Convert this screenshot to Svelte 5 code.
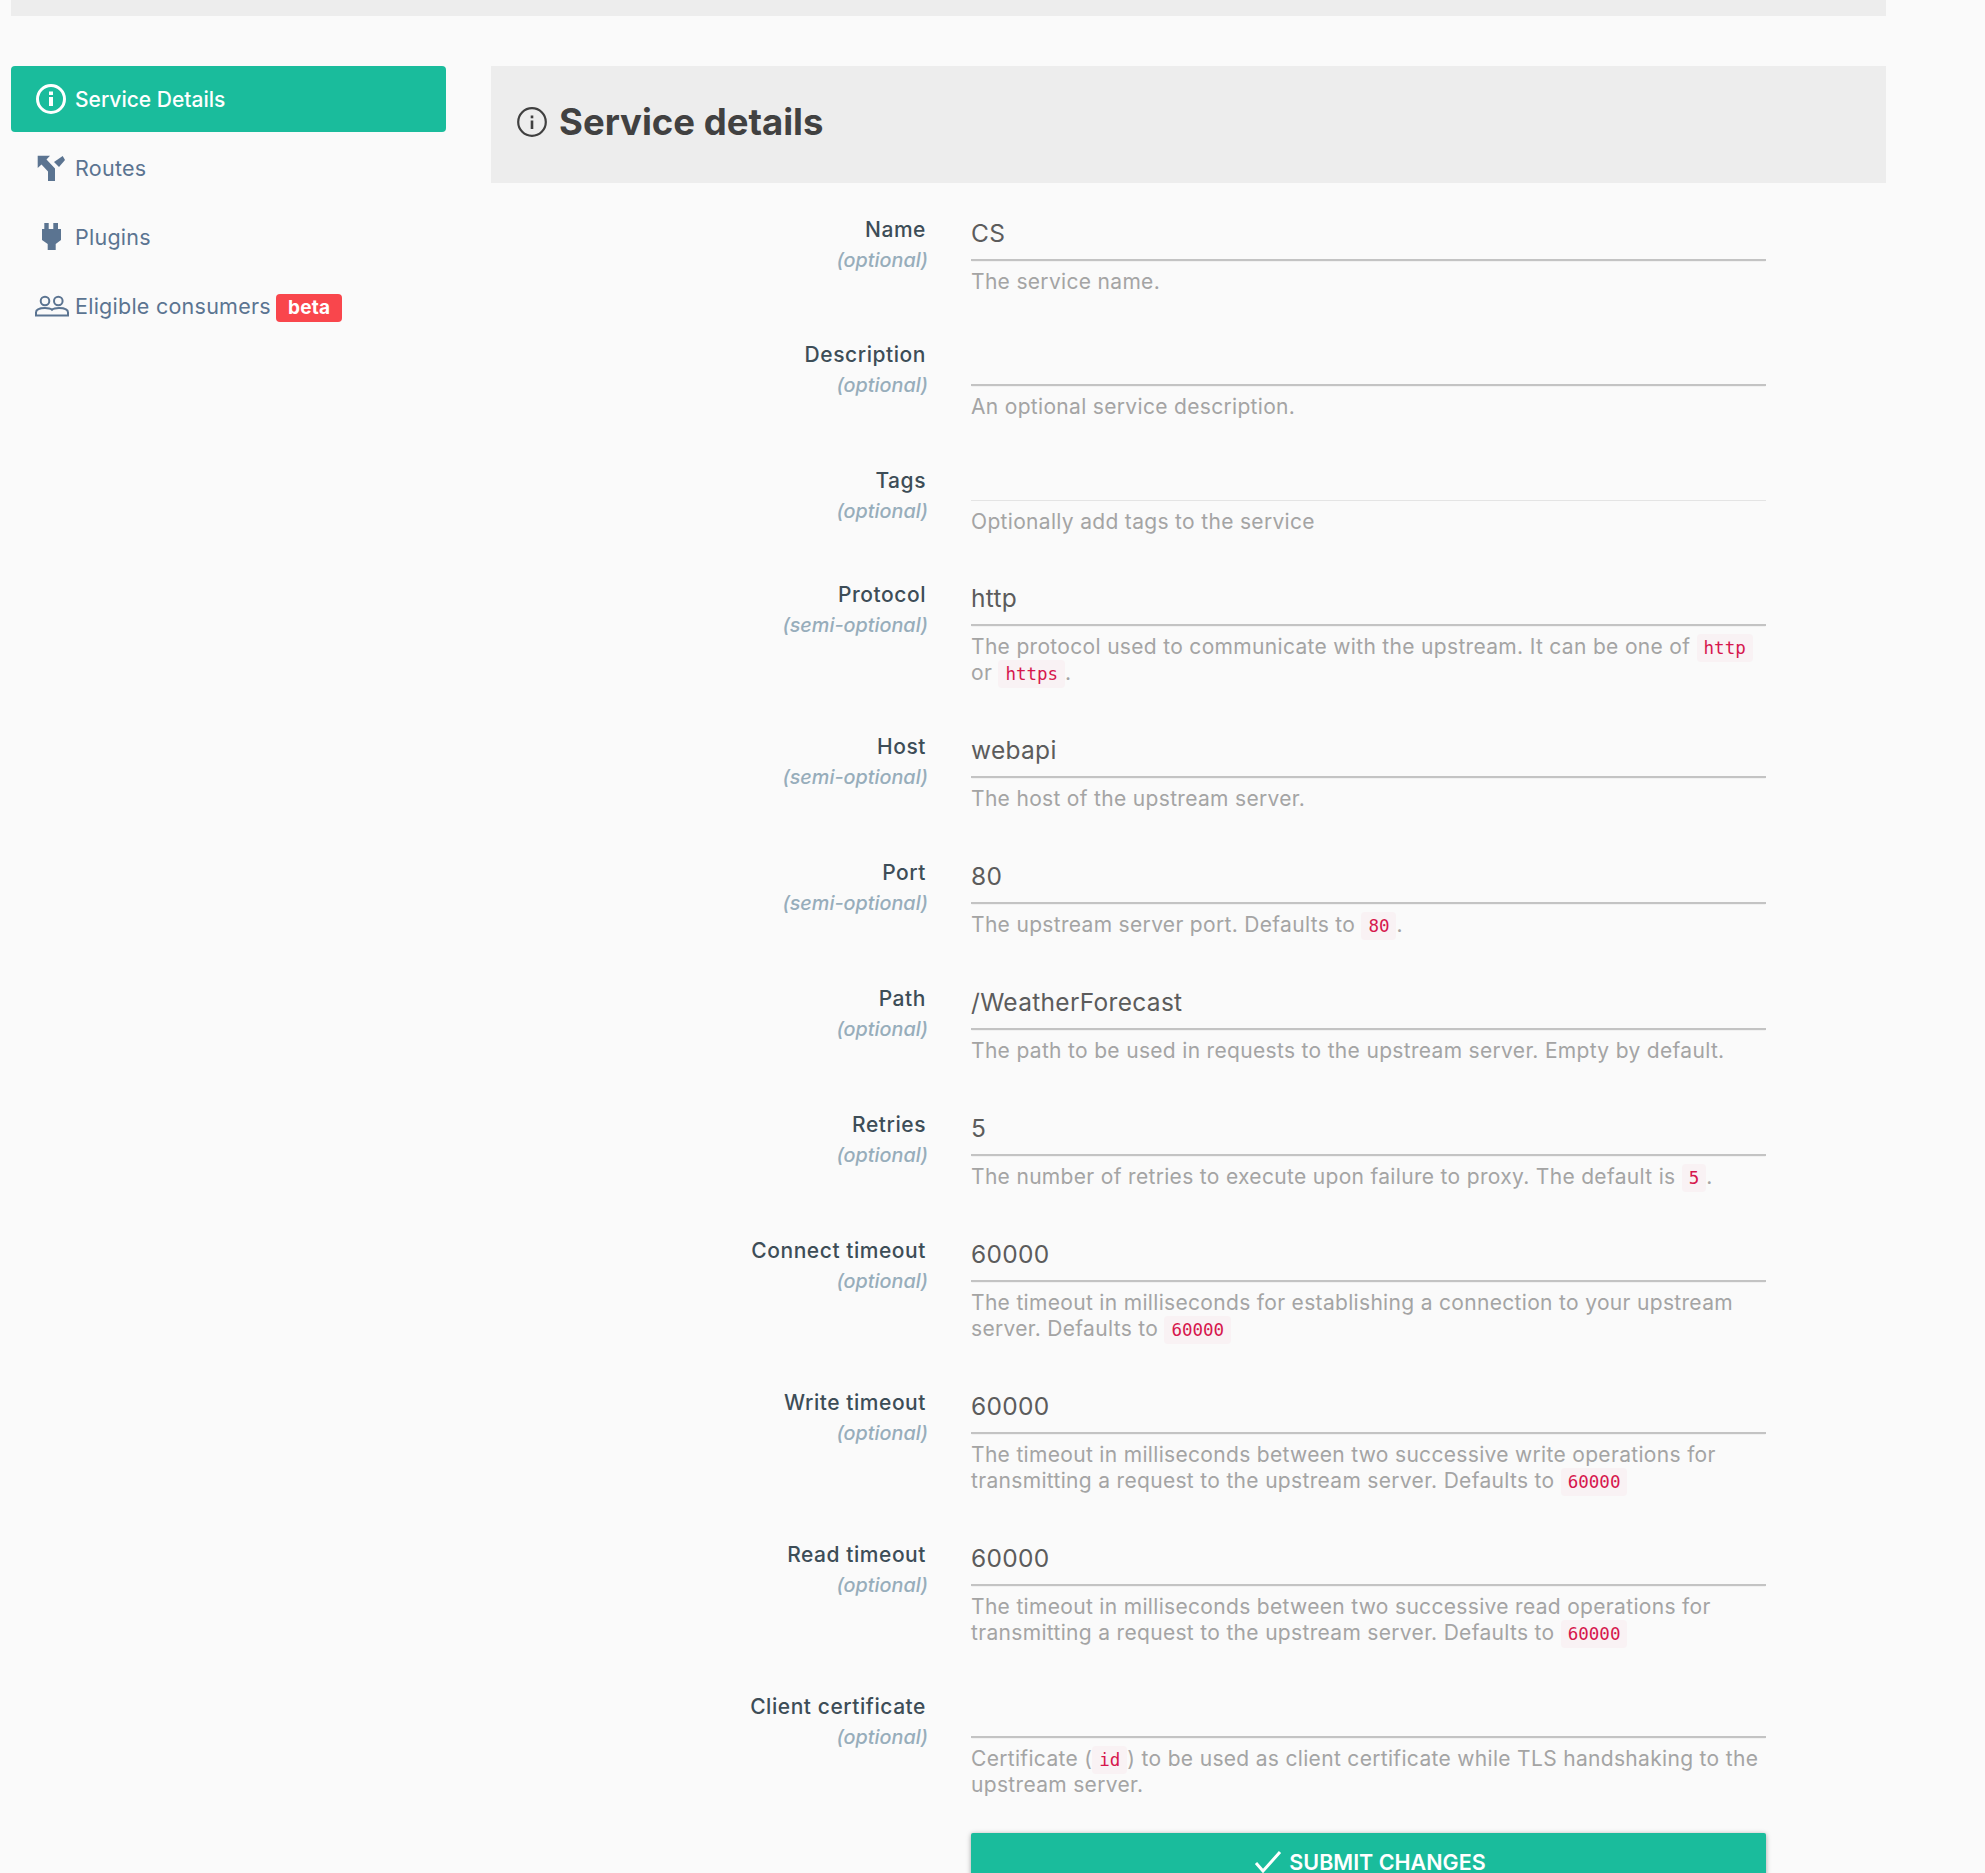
<script lang="ts">
  type Part = string | { code: string };
  interface Field {
    label: string;
    hint: string;
    value: string;
    help: Part[];
    tags?: boolean;
  }

  const nav = [
    { label: 'Service Details', icon: 'info', active: true },
    { label: 'Routes', icon: 'routes' },
    { label: 'Plugins', icon: 'plug' },
    { label: 'Eligible consumers', icon: 'users', badge: 'beta' },
  ];

  const fields: Field[] = [
    { label: 'Name', hint: '(optional)', value: 'CS', help: ['The service name.'] },
    { label: 'Description', hint: '(optional)', value: '', help: ['An optional service description.'] },
    { label: 'Tags', hint: '(optional)', value: '', help: ['Optionally add tags to the service'], tags: true },
    {
      label: 'Protocol',
      hint: '(semi-optional)',
      value: 'http',
      help: ['The protocol used to communicate with the upstream. It can be one of ', { code: 'http' }, ' or ', { code: 'https' }, '.'],
    },
    { label: 'Host', hint: '(semi-optional)', value: 'webapi', help: ['The host of the upstream server.'] },
    { label: 'Port', hint: '(semi-optional)', value: '80', help: ['The upstream server port. Defaults to ', { code: '80' }, '.'] },
    { label: 'Path', hint: '(optional)', value: '/WeatherForecast', help: ['The path to be used in requests to the upstream server. Empty by default.'] },
    { label: 'Retries', hint: '(optional)', value: '5', help: ['The number of retries to execute upon failure to proxy. The default is ', { code: '5' }, '.'] },
    {
      label: 'Connect timeout',
      hint: '(optional)',
      value: '60000',
      help: ['The timeout in milliseconds for establishing a connection to your upstream server. Defaults to ', { code: '60000' }],
    },
    {
      label: 'Write timeout',
      hint: '(optional)',
      value: '60000',
      help: ['The timeout in milliseconds between two successive write operations for transmitting a request to the upstream server. Defaults to ', { code: '60000' }],
    },
    {
      label: 'Read timeout',
      hint: '(optional)',
      value: '60000',
      help: ['The timeout in milliseconds between two successive read operations for transmitting a request to the upstream server. Defaults to ', { code: '60000' }],
    },
    {
      label: 'Client certificate',
      hint: '(optional)',
      value: '',
      help: ['Certificate (', { code: 'id' }, ') to be used as client certificate while TLS handshaking to the upstream server.'],
    },
  ];
</script>

{#snippet icon(name: string)}
  {#if name === 'info'}
    <svg class="ico" viewBox="0 0 30 30" width="30" height="30">
      <circle cx="15" cy="15" r="13.500" fill="none" stroke="currentColor" stroke-width="3" />
      <rect x="13" y="13" width="4" height="9" fill="currentColor" />
      <rect x="13" y="7.500" width="4" height="3.500" fill="currentColor" />
    </svg>
  {:else if name === 'routes'}
    <svg class="ico" viewBox="0 0 30 30" width="30" height="30">
      <path fill="currentColor" d="M1.700 2.700H14L10.500 6.500 19 15.500V28H12V18.500L5.500 11.500 1.700 15z" />
      <path fill="currentColor" d="M26.700 3L29 7 23 14 18 9z" />
    </svg>
  {:else if name === 'plug'}
    <svg class="ico" viewBox="0 0 30 30" width="30" height="30">
      <path fill="currentColor" d="M8.300 1h4.400v6h4.600V1H22v6h3v11l-5.300 4v6h-8v-6L6 18V7h2.300z" />
    </svg>
  {:else}
    <svg class="ico users" viewBox="0 0 34 30" width="34" height="30">
      <g fill="none" stroke="currentColor" stroke-width="2">
        <circle cx="10" cy="10" r="4.300" />
        <circle cx="23.300" cy="10" r="4.300" />
        <path d="M1 24.500v-3c0-2.800 3-4.500 9-4.500 3 0 5.700.6 7 1.800 1.300-1.200 4-1.800 7-1.800 6 0 9 1.700 9 4.500v3z" />
      </g>
    </svg>
  {/if}
{/snippet}

<div class="page">
  <div class="topbar"></div>
  <div class="layout">
    <nav class="side">
      {#each nav as item}
        <a class="nav-item" class:active={item.active} href="#top">
          <span class="nav-icon">{@render icon(item.icon)}</span>
          <span>{item.label}</span>
          {#if item.badge}<span class="badge">{item.badge}</span>{/if}
        </a>
      {/each}
    </nav>

    <main class="content">
      <header class="head">
        <svg viewBox="0 0 30 30" width="30" height="30">
          <circle cx="15" cy="15" r="13.800" fill="none" stroke="#404040" stroke-width="2.200" />
          <rect x="13.700" y="13.500" width="2.600" height="8.500" fill="#404040" />
          <rect x="13.700" y="8.500" width="2.600" height="2.800" fill="#404040" />
        </svg>
        <h1>Service details</h1>
      </header>

      <form class="form">
        {#each fields as f}
          <div class="row" class:tags={f.tags}>
            <div class="labels">
              <div class="label">{f.label}</div>
              <div class="hint">{f.hint}</div>
            </div>
            <div class="control">
              <div class="input">{f.value}</div>
              <p class="help">{#each f.help as part}{#if typeof part === 'string'}{part}{:else}<code>{part.code}</code>{/if}{/each}</p>
            </div>
          </div>
        {/each}
        <div class="actions">
          <button type="button" class="submit">
            <svg viewBox="0 0 28 24" width="28" height="24">
              <path d="M2 13l7 8L26 2" fill="none" stroke="#fff" stroke-width="3" />
            </svg>
            SUBMIT CHANGES
          </button>
        </div>
      </form>
    </main>
  </div>
</div>

<style>
  :global(body) {
    margin: 0;
    background: #fafafa;
  }

  .page {
    width: 1985px;
    height: 1873px;
    overflow: hidden;
    padding-left: 11px;
    box-sizing: border-box;
    font-family: Inter, 'DejaVu Sans', sans-serif;
    font-size: 20px;
  }

  .topbar {
    width: 1875px;
    height: 16px;
    background: #ededed;
  }

  .layout {
    display: flex;
    gap: 45px;
    width: 1875px;
    margin-top: 50px;
  }

  .side {
    width: 435px;
    flex: none;
    display: flex;
    flex-direction: column;
    gap: 3px;
  }

  .nav-item {
    display: flex;
    align-items: center;
    height: 66px;
    padding-left: 25px;
    color: #5b7491;
    text-decoration: none;
    border-radius: 4px;
    font-size: 21.500px;
    letter-spacing: 0.25px;
  }

  .nav-item.active {
    background: #1abc9c;
    color: #fff;
    font-weight: 500;
    font-size: 21px;
    letter-spacing: 0;
  }

  .nav-icon {
    width: 39px;
    flex: none;
    display: flex;
  }

  .users {
    margin-left: -1px;
    flex: none;
  }

  .badge {
    margin: 4px 0 0 5px;
    padding: 0 12px;
    height: 28px;
    line-height: 27px;
    background: #f9464c;
    color: #fff;
    border-radius: 4px;
    font-weight: 700;
    font-size: 19px;
  }

  .content {
    flex: 1;
    min-width: 0;
  }

  .head {
    display: flex;
    align-items: center;
    gap: 12px;
    height: 117px;
    padding-left: 26px;
    background: #ededed;
  }

  .head svg {
    margin-bottom: 6px;
  }

  .head h1 {
    margin: 0 0 5px;
    font-size: 36.500px;
    font-weight: 700;
    color: #414141;
  }

  .form {
    padding-top: 29px;
  }

  .row {
    display: grid;
    grid-template-columns: 435px 795px;
    column-gap: 45px;
    margin-bottom: 43px;
  }

  .row:first-child,
  .row.tags {
    margin-bottom: 42px;
  }

  .row:nth-last-child(2) {
    margin-bottom: 35px;
  }

  .labels {
    text-align: right;
    padding-top: 4px;
  }

  .label {
    color: #3d4d57;
    font-size: 21px;
    font-weight: 500;
    letter-spacing: 0.55px;
    line-height: 28px;
  }

  .hint {
    margin: 3px -2px 0 0;
    color: #97adbb;
    font-size: 19.800px;
    font-style: italic;
    font-weight: 500;
    line-height: 26px;
  }

  .input {
    height: 46px;
    box-sizing: content-box;
    padding-top: 1px;
    border-bottom: 2px solid #c3c3c3;
    box-shadow: 0 1px 0 -0.5px #e8e8e8;
    color: #5c5c5c;
    font-size: 24.500px;
    letter-spacing: 0.3px;
    line-height: 40px;
  }

  .tags .input {
    height: 36px;
    border-bottom: 1px solid #e4e4e4;
    box-shadow: none;
  }

  .help {
    margin: 8px 0 0;
    color: #a4a4a4;
    font-size: 21px;
    letter-spacing: 0.32px;
    line-height: 26px;
  }

  code {
    font-family: 'DejaVu Sans Mono', monospace;
    font-size: 17.500px;
    line-height: 1;
    letter-spacing: 0;
    color: #d6174d;
    background: #f9f2f4;
    border-radius: 4px;
    padding: 4px 7px;
  }

  .actions {
    margin-left: 480px;
    width: 795px;
  }

  .submit {
    width: 100%;
    height: 80px;
    display: flex;
    align-items: center;
    justify-content: center;
    gap: 7px;
    padding: 0 0 22px 3px;
    border: 0;
    border-radius: 2px;
    background: #1abc9c;
    color: #fff;
    font: 600 21.500px Inter, sans-serif;
    box-shadow: 0 1px 5px rgba(0, 0, 0, 0.35);
  }
</style>
